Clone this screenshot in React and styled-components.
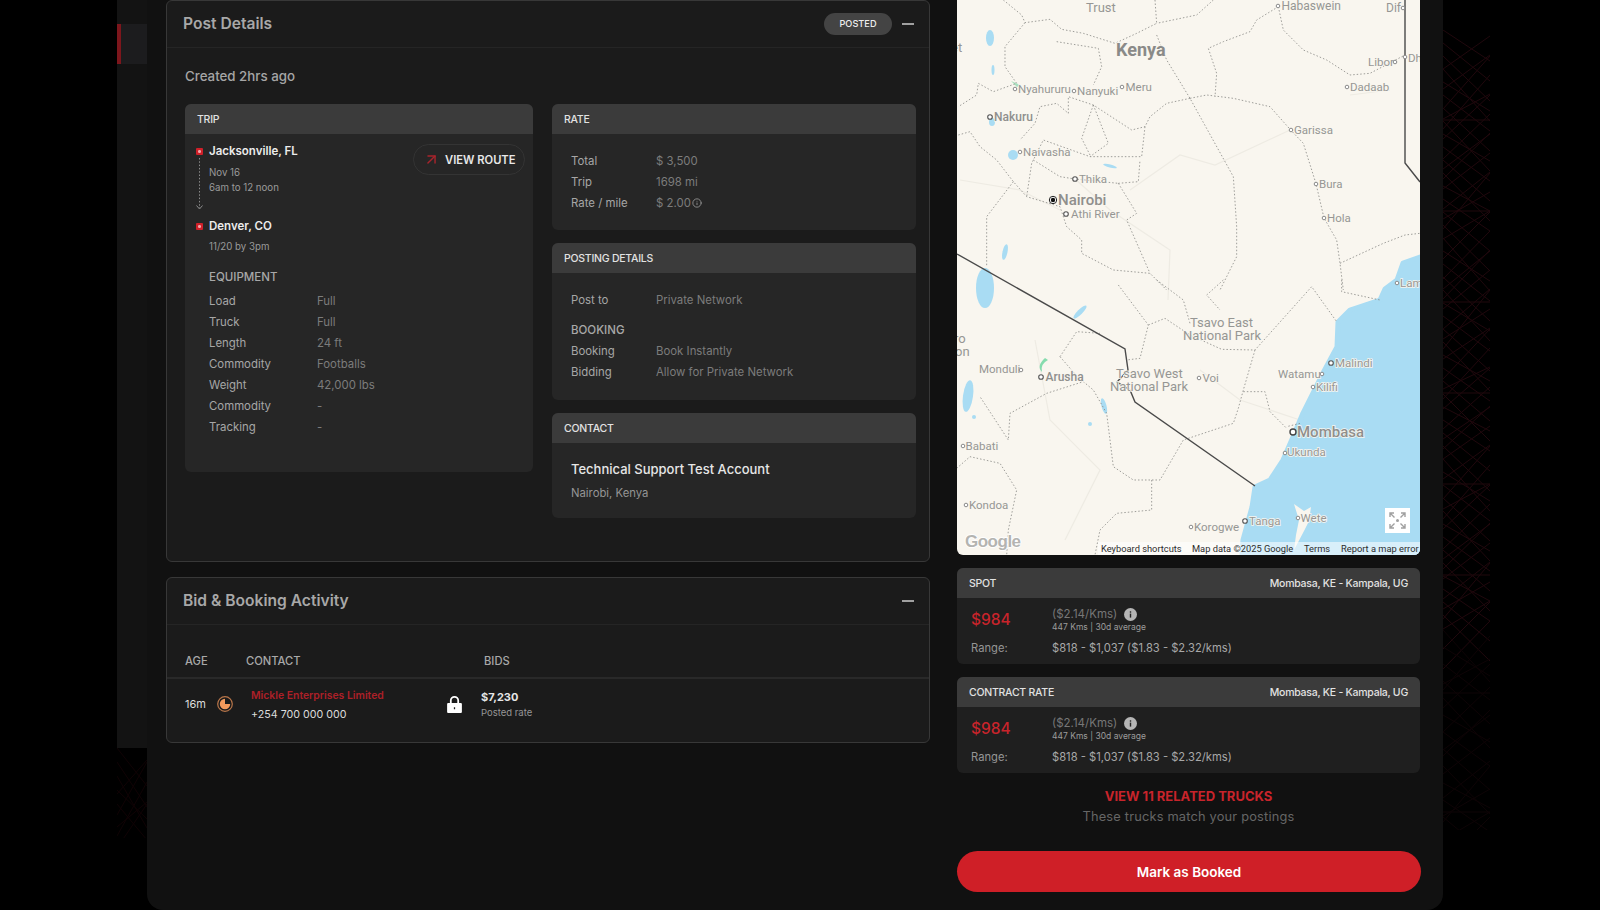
import React from 'react';
import styled, { createGlobalStyle } from 'styled-components';
import { ArrowUpRight, Info } from 'lucide-react';

const GlobalStyle = createGlobalStyle`
  html, body {
    margin: 0;
    padding: 0;
    background: #000;
  }
  body {
    font-family: 'Inter', 'Liberation Sans', sans-serif;
    color: #ddd;
  }
  * {
    box-sizing: border-box;
  }
`;

const Page = styled.div`
  display: flex;
  width: 1600px;
  height: 910px;
  overflow: hidden;
  background: #000;
`;

const Gutter = styled.div`
  width: 117px;
  flex: none;
`;

const Rail = styled.div`
  width: 30px;
  flex: none;
  display: flex;
  flex-direction: column;
`;

const RailPanel = styled.div`
  height: 748px;
  padding-top: 24px;
  background: #131313;
`;

const RedTab = styled.div`
  height: 40px;
  background: #1c1c1e;
  border-left: 4px solid #7d161c;
`;

const Main = styled.main`
  width: 1296px;
  height: 910px;
  flex: none;
  display: flex;
  gap: 27px;
  padding: 0 23px 0 19px;
  background: #111;
  border-radius: 0 0 16px 16px;
`;

const LeftColumn = styled.div`
  width: 764px;
  flex: none;
`;

const RightColumn = styled.div`
  width: 463px;
  flex: none;
`;

const Panel = styled.section`
  height: ${(p) => p.$height}px;
  margin-top: ${(p) => p.$top || 0}px;
  background: #1b1b1b;
  border: 1px solid #383838;
  border-radius: 6px;
`;

const PanelHeader = styled.header`
  display: flex;
  align-items: center;
  height: 47px;
  padding: 0 15px 0 16px;
  border-bottom: 1px solid #252525;
`;

const PanelTitle = styled.h2`
  flex: 1;
  margin: 0;
  font-size: 15.6px;
  line-height: 20px;
  font-weight: 600;
  color: #a8a8a8;
`;

const StatusPill = styled.span`
  width: 68px;
  height: 22px;
  margin-right: 10px;
  border-radius: 11px;
  background: #444;
  color: #eee;
  font-size: 9.2px;
  font-weight: 500;
  line-height: 22px;
  text-align: center;
`;

const Collapse = styled.span`
  width: 12px;
  height: 2px;
  background: #a0a0a0;
`;

const PanelBody = styled.div`
  padding: 18px 13px 0 18px;
`;

const Created = styled.div`
  margin-bottom: 18px;
  font-size: 13.3px;
  line-height: 20px;
  font-weight: 500;
  color: #a6a6a6;
`;

const Columns = styled.div`
  display: grid;
  grid-template-columns: 348px 364px;
  gap: 19px;
  align-items: start;
`;

const Stack = styled.div`
  display: flex;
  flex-direction: column;
  gap: 13px;
`;

const Card = styled.div`
  overflow: hidden;
  border-radius: 6px;
  background: ${(p) => p.$bg || '#262626'};
`;

const CardHeader = styled.div`
  display: flex;
  justify-content: space-between;
  align-items: center;
  height: 30px;
  padding: 0 12px;
  background: #3b3b3b;
  color: #e2e2e2;
  font-size: 10.5px;
  letter-spacing: -0.25px;
  font-weight: 500;
`;

const TripBody = styled.div`
  padding: 9px 8px 34px 11px;
`;

const TripTop = styled.div`
  display: flex;
  justify-content: space-between;
  align-items: flex-start;
`;

const Stop = styled.div`
  display: flex;
  gap: 6px;
  padding-bottom: ${(p) => (p.$last ? 0 : 7)}px;
`;

const MarkerColumn = styled.div`
  width: 7px;
  flex: none;
  display: flex;
  flex-direction: column;
  align-items: center;
  padding-top: 5px;
`;

const Marker = styled.span`
  display: block;
  width: 7px;
  height: 7px;
  flex: none;
  border-radius: 1px;
  background: radial-gradient(circle, #f2a6aa 0 1.2px, #cf2029 1.8px);
`;

const Connector = styled.svg`
  flex: none;
  margin-top: 3px;
`;

const StopName = styled.div`
  font-size: 11.5px;
  line-height: 16px;
  font-weight: 600;
  color: #ececec;
`;

const StopNote = styled.div`
  margin-top: ${(p) => p.$top || 0}px;
  font-size: 9.7px;
  line-height: 15px;
  color: #9a9a9a;
`;

const RouteButton = styled.div`
  display: flex;
  align-items: center;
  gap: 5px;
  width: 112px;
  height: 31px;
  margin-top: 1px;
  padding-left: 9px;
  border: 1px solid #343434;
  border-radius: 16px;
  color: #e8e8e8;
  font-size: 11.2px;
  font-weight: 600;
`;

const SubHeading = styled.div`
  margin-top: ${(p) => p.$top || 0}px;
  font-size: 11.5px;
  line-height: 16px;
  font-weight: 500;
  color: #a8a8a8;
`;

const EquipmentBlock = styled.div`
  padding: 15px 0 0 13px;
`;

const InfoRows = styled.div`
  display: grid;
  grid-template-columns: ${(p) => p.$label}px 1fr;
  margin-top: ${(p) => p.$top || 0}px;
  font-size: 11.4px;
  line-height: 21px;
`;

const InfoLabel = styled.span`
  color: #a6a6a6;
`;

const InfoValue = styled.span`
  display: flex;
  align-items: center;
  gap: 1px;
  color: #7c7c7c;
`;

const InfoBody = styled.div`
  padding: 16.5px 19px ${(p) => p.$bottom || 16.5}px;
`;

const ContactBody = styled.div`
  padding: 16px 19px 17px;
`;

const ContactName = styled.div`
  font-size: 13px;
  line-height: 20px;
  font-weight: 500;
  color: #e6e6e6;
`;

const ContactPlace = styled.div`
  margin-top: 6px;
  font-size: 11.3px;
  line-height: 16px;
  color: #959595;
`;

const TableHead = styled.div`
  display: grid;
  grid-template-columns: 61px 238px 1fr;
  padding: 28px 18px 8px;
  border-bottom: 2px solid #292929;
  font-size: 11.2px;
  line-height: 16px;
  font-weight: 500;
  color: #a8a8a8;
`;

const TableRow = styled.div`
  display: grid;
  grid-template-columns: 32px 34px 195px 35px 1fr;
  align-items: center;
  height: 50px;
  padding-left: 18px;
`;

const Age = styled.span`
  font-size: 11px;
  color: #ddd;
`;

const CompanyName = styled.div`
  margin-top: 2px;
  font-size: 10.4px;
  line-height: 16px;
  font-weight: 600;
  color: #ac2028;
`;

const Phone = styled.div`
  margin-top: 3px;
  font-size: 10.7px;
  line-height: 16px;
  color: #dcdcdc;
`;

const BidAmount = styled.div`
  font-size: 11px;
  line-height: 16px;
  font-weight: 700;
  color: #e6e6e6;
`;

const BidNote = styled.div`
  font-size: 9.5px;
  line-height: 15px;
  color: #969696;
`;

const MapFrame = styled.div`
  position: relative;
  height: 555px;
  overflow: hidden;
  border-radius: 0 0 6px 6px;
  background: #f9f6ef;
`;

const MapCanvas = styled.svg`
  display: block;
`;

const MapLabel = styled.text`
  font-family: 'Roboto', 'Liberation Sans', sans-serif;
  font-size: ${(p) => p.$size || 11.5}px;
  font-weight: ${(p) => p.$weight || 400};
  fill: ${(p) => p.$fill || '#969694'};
  stroke: #f9f6ef;
  stroke-width: 1.5px;
  paint-order: stroke;
`;

const GoogleMark = styled.div`
  position: absolute;
  left: 8px;
  bottom: 2px;
  font-family: 'Liberation Sans', sans-serif;
  font-size: 17px;
  line-height: 22px;
  font-weight: 700;
  letter-spacing: -0.5px;
  color: #b4b4b1;
  text-shadow: 0 0 1px #fff, 1px 0 1px #fff, -1px 0 1px #fff, 0 1px 1px #fff, 0 -1px 1px #fff;
`;

const FullscreenButton = styled.div`
  position: absolute;
  right: 10px;
  bottom: 22px;
  display: flex;
  width: 25px;
  height: 25px;
  background: #fff;
`;

const Attribution = styled.div`
  position: absolute;
  right: 0;
  bottom: 0;
  display: flex;
  width: 322px;
  height: 13px;
  padding-left: 3px;
  background: rgba(255, 255, 255, 0.55);
  color: #2c2c2c;
  font-family: 'Roboto', 'Liberation Sans', sans-serif;
  font-size: 9.3px;
  line-height: 13px;
  white-space: nowrap;
`;

const AttributionItem = styled.span`
  width: ${(p) => p.$width}px;
  flex: none;
`;

const RateCard = styled(Card)`
  margin-top: 13px;
`;

const RateBody = styled.div`
  height: 66px;
  padding: 8px 14px 0;
`;

const RateGrid = styled.div`
  display: grid;
  grid-template-columns: 81px 1fr;
  align-items: center;
`;

const RatePrice = styled.span`
  font-size: 15.5px;
  font-weight: 500;
  color: #c8242b;
`;

const RatePerKm = styled.div`
  display: flex;
  align-items: center;
  gap: 7px;
  font-size: 11.5px;
  line-height: 16px;
  color: #777;
`;

const RateSub = styled.div`
  font-size: 8.5px;
  line-height: 11px;
  color: #9c9c9c;
`;

const RangeRow = styled(RateGrid)`
  margin-top: 7px;
  font-size: 11.2px;
  line-height: 16px;
`;

const RangeLabel = styled.span`
  color: #959595;
`;

const RangeValue = styled.span`
  color: #a8a8a8;
`;

const RelatedLink = styled.div`
  margin-top: 14px;
  text-align: center;
  font-size: 13px;
  line-height: 18px;
  font-weight: 700;
  color: #c8242b;
`;

const RelatedNote = styled.div`
  margin-top: 3px;
  text-align: center;
  font-size: 12.8px;
  line-height: 18px;
  letter-spacing: 0.2px;
  color: #666;
`;

const BookButton = styled.button`
  display: block;
  width: calc(100% + 1px);
  height: 41px;
  margin-top: 25px;
  border: 0;
  border-radius: 21px;
  background: #cf1f27;
  color: #fff;
  font-family: inherit;
  font-size: 13.5px;
  font-weight: 600;
`;

const RightGutter = styled.div`
  width: 47px;
  flex: none;
  padding-top: 30px;
`;

const PatternSvg = styled.svg`
  display: block;
`;

const equipment = [
  ['Load', 'Full'],
  ['Truck', 'Full'],
  ['Length', '24 ft'],
  ['Commodity', 'Footballs'],
  ['Weight', '42,000 lbs'],
  ['Commodity', '-'],
  ['Tracking', '-'],
];

// the reference's map crops a few labels at its edge (et, ro, on, Dh, Lam), so they stay cropped here
const places = [
  ['Trust', 1086, 12, 13],
  ['Habaswein', 1281.5, 10, 12],
  ['Dif', 1386, 12, 12],
  ['et', 951, 52, 13],
  ['Kenya', 1116, 56, 18, 700, '#8a8a88'],
  ['Nyahururu', 1018, 92.5],
  ['Nanyuki', 1077, 95],
  ['Meru', 1125.5, 91],
  ['Nakuru', 994, 121, 12, 500, '#8f8f8d'],
  ['Naivasha', 1023, 156],
  ['Thika', 1079, 183],
  ['Nairobi', 1058, 205, 15, 500, '#8f8f8d'],
  ['Athi River', 1071, 218],
  ['Garissa', 1294, 134],
  ['Bura', 1319, 188],
  ['Hola', 1327, 222],
  ['Dadaab', 1350, 91],
  ['Libor', 1368, 66],
  ['Dh', 1408, 62],
  ['Lam', 1400, 287],
  ['Tsavo East', 1190, 327, 13],
  ['National Park', 1183, 339.5, 13],
  ['ro', 954, 343, 13],
  ['on', 955, 356, 13],
  ['Monduli', 979, 373],
  ['Arusha', 1045.5, 381, 12, 500, '#8f8f8d'],
  ['Tsavo West', 1116, 378, 13],
  ['National Park', 1110, 391, 13],
  ['Voi', 1202.5, 382],
  ['Watamu', 1278, 378],
  ['Malindi', 1335, 367],
  ['Kilifi', 1316, 391],
  ['Mombasa', 1297, 437, 15, 500, '#8f8f8d'],
  ['Ukunda', 1287, 456],
  ['Babati', 965.5, 450],
  ['Kondoa', 969, 509],
  ['Korogwe', 1194, 531],
  ['Tanga', 1249, 525],
  ['Wete', 1300.5, 522],
];

const dots = [
  [1278, 6], [1403, 8], [1015, 89], [1074, 91], [1122, 87], [1020, 152], [1291, 130],
  [1316, 184], [1324, 218], [1347, 87], [1395, 62], [1405, 57], [1397, 283], [1021, 370],
  [1199, 378], [1322, 374], [1313, 387], [1285, 453], [963, 446], [966, 505], [1191, 527],
  [1298, 518],
];

const openDots = [
  [990, 117], [1075, 179], [1066, 214], [1041, 377], [1331, 363], [1245, 521],
];

// dotted county lines, traced in zoomed coords (3x), see the group transforms
const upperBorders = [
  'M160 0L215 45L225 68L300 58L335 88L400 100L495 130L560 100L620 70L615 0',
  'M790 0L740 45L620 70',
  'M985 20L920 60L900 95L820 125L775 145L800 220L795 290',
  'M985 20L1000 90L1060 150L1130 180L1200 225L1260 220L1365 165',
  'M620 105L650 180L720 295L850 530L860 680L860 770L810 870',
  'M720 295L770 285L850 295L960 320L1022 390L1060 430L1098 551L1122 654L1160 720L1170 790L1180 870',
  'M1170 790L1300 730L1365 705L1410 700',
  'M720 295L650 310L600 350L585 380L545 390L430 315L355 290L355 340L320 310L270 320L255 370L210 420',
  'M430 315L395 415L420 465M430 315L475 430L420 470',
  'M225 68L165 140L165 200L200 250L130 275L85 250L80 285L25 320',
  'M25 405L60 395L90 440L140 480L190 545L230 590L330 620L350 680L395 720L395 760L490 810L600 820L650 870',
  'M190 545L110 650L110 800',
  'M585 380L575 470L420 470L280 420L245 490L230 590',
  'M505 550L560 640L530 660L600 820M505 550L565 545L570 480',
  'M250 480L330 530L375 537L505 550',
  'M320 125L445 145L455 200L430 255',
];

const lowerBorders = [
  'M505 15L595 135L570 235L530 240',
  'M620 0L700 60L720 130',
  'M595 135L645 115L720 165L815 208L915 210L1085 20L1160 125',
  'M1175 0L1175 35L1290 60',
  'M820 0L770 45L810 90',
  'M915 210L880 330L865 385L850 430L700 480L630 600L550 600L490 560L470 400L430 330L400 305L290 340L180 400L175 480L90 350',
  'M880 335L945 335L960 395L1010 445M1050 430L1010 440',
  'M330 230L380 155L450 160M330 230L395 305',
  'M20 565L60 530L150 550L200 630L175 750L170 825',
  'M605 600L605 690L500 700L450 750L435 825',
];

const roads = [
  'M1290 130L1215 165L1180 155L1130 190',
  'M1350 95L1390 90',
  'M1075 179L1110 210L1170 250L1168 300',
  'M1200 370L1240 400L1300 420',
  'M1035 340L1050 420L1100 470L1065 540',
  'M960 180L1020 190L1060 210',
];

// faint red mesh on the black margins, generated instead of traced
function meshLines(width, height, step, seed) {
  const lines = [];
  for (let y = 0, i = seed; y < height; y += step, i += 1) {
    const drop = 24 + ((i * 37) % 30);
    lines.push(`M0 ${y}L${width} ${y + drop}`);
    lines.push(`M${width} ${y + (i % 3) * 6}L0 ${y + drop + 8}`);
    if (i % 7 === 0) lines.push(`M0 ${y + 12}L${width} ${y + 12}`);
  }
  return lines.join('');
}

const CollapseHeader = ({ title, children }) => (
  <PanelHeader>
    <PanelTitle>{title}</PanelTitle>
    {children}
    <Collapse />
  </PanelHeader>
);

const Rows = ({ rows, label, top }) => (
  <InfoRows $label={label} $top={top}>
    {rows.map(([name, value], i) => (
      <React.Fragment key={i}>
        <InfoLabel>{name}</InfoLabel>
        <InfoValue>{value}</InfoValue>
      </React.Fragment>
    ))}
  </InfoRows>
);

const ClockIcon = () => (
  <svg width="16" height="16" viewBox="0 0 16 16">
    <circle cx="8" cy="8" r="7.3" fill="none" stroke="#b9764a" strokeWidth="1.2" />
    <path d="M8 2.8A5.2 5.2 0 1 0 13.2 8H8Z" fill="#f59a5c" />
  </svg>
);

const LockIcon = () => (
  <svg width="17" height="19" viewBox="0 0 16 18">
    <path d="M4.5 8V5.2a3.5 3.5 0 0 1 7 0V8" fill="none" stroke="#fff" strokeWidth="1.7" />
    <path
      fillRule="evenodd"
      d="M2 7.5h12a1 1 0 0 1 1 1V16a1 1 0 0 1-1 1H2a1 1 0 0 1-1-1V8.500a1 1 0 0 1 1-1ZM7.400 11.500v2h1.200v-2Z"
      fill="#fff"
    />
  </svg>
);

const InfoDot = () => (
  <svg width="13" height="13" viewBox="0 0 13 13">
    <circle cx="6.500" cy="6.500" r="6.500" fill="#b5b5b5" />
    <rect x="5.800" y="5.600" width="1.400" height="4" fill="#222" />
    <rect x="5.800" y="3.300" width="1.400" height="1.400" fill="#222" />
  </svg>
);

const FullscreenIcon = () => (
  <svg width="25" height="25" viewBox="0 0 25 25" fill="none" stroke="#a0a0a0" strokeWidth="1.4">
    <path d="M5 9V5H9M5 5L9.500 9.500M20 9V5H16M20 5L15.500 9.500M5 16V20H9M5 20L9.500 15.500M20 16V20H16M20 20L15.500 15.500" />
    <circle cx="12.500" cy="12.500" r="1.500" fill="#a0a0a0" stroke="none" />
  </svg>
);

const MapDrawing = () => (
  <MapCanvas width="463" height="555" viewBox="957 0 463 555">
    {roads.map((d) => (
      <path key={d} d={d} fill="none" stroke="#eeebe3" strokeWidth="1.2" />
    ))}
    <path
      d="M1420 257L1403 263L1397 280L1385 289L1380 300L1350 310L1338 322L1337 347L1323 373L1312 395L1303 413L1293 437L1283 460L1270 480L1255 487L1252 507L1243 540L1242 555L1420 555Z"
      fill="#a9dcf3"
      stroke="#a9dcf3"
      strokeWidth="5"
      strokeLinejoin="round"
    />
    <path d="M1294 504L1304 511L1311 507L1309 521L1304 531L1294 550L1296 535L1299 520Z" fill="#f9f6ef" />
    <g fill="#a9dcf3">
      <ellipse cx="990" cy="38" rx="4" ry="8" />
      <ellipse cx="1013" cy="155" rx="5" ry="5" />
      <ellipse cx="985" cy="288" rx="9" ry="20" />
      <ellipse cx="992" cy="122" rx="3" ry="4" />
      <ellipse cx="993" cy="70" rx="1.500" ry="5" />
      <ellipse cx="1005" cy="252" rx="2.500" ry="8" transform="rotate(12 1005 252)" />
      <ellipse cx="1080" cy="312" rx="2.500" ry="9" transform="rotate(45 1080 312)" />
      <ellipse cx="968" cy="396" rx="5" ry="16" transform="rotate(8 968 396)" />
      <ellipse cx="1104" cy="406" rx="2.500" ry="8" transform="rotate(-15 1104 406)" />
      <circle cx="1090" cy="424" r="2" />
      <circle cx="974" cy="417" r="2" />
      <ellipse cx="1110" cy="166" rx="7" ry="1.500" transform="rotate(15 1110 166)" />
    </g>
    <path d="M1045 358Q1036 366 1042 372Q1040 364 1048 360Z" fill="#86dcae" />
    <path d="M1011 81L1020 85L1017 87Z" fill="#a8e0bd" />
    <g transform="translate(950 0) scale(.33333)" fill="none" stroke="#8b8b88" strokeWidth="2.500" strokeDasharray="4.500 6">
      {upperBorders.map((d) => (
        <path key={d} d={d} />
      ))}
    </g>
    <g transform="translate(950 280) scale(.33333)" fill="none" stroke="#8b8b88" strokeWidth="2.500" strokeDasharray="4.500 6">
      {lowerBorders.map((d) => (
        <path key={d} d={d} />
      ))}
    </g>
    <g fill="none" stroke="#4a4a4a" strokeWidth="1.400">
      <path d="M957 254L1125 349L1128 370L1117 382L1130 390L1135 402L1255 486" />
      <path d="M1405 0V163L1420 182" />
    </g>
    {places.map(([name, x, y, size, weight, fill]) => (
      <MapLabel key={`${name}${x}`} x={x} y={y} $size={size} $weight={weight} $fill={fill}>
        {name}
      </MapLabel>
    ))}
    {dots.map(([x, y]) => (
      <circle key={`${x}${y}`} cx={x} cy={y} r="1.800" fill="#fff" stroke="#8a8a8a" strokeWidth="1" />
    ))}
    {openDots.map(([x, y]) => (
      <circle key={`${x}${y}`} cx={x} cy={y} r="2.300" fill="#fff" stroke="#555" strokeWidth="1.100" />
    ))}
    <circle cx="1053" cy="200" r="3.700" fill="#fff" stroke="#222" strokeWidth="1" />
    <circle cx="1053" cy="200" r="2.200" fill="#111" />
    <circle cx="1293" cy="432" r="3" fill="#fff" stroke="#444" strokeWidth="1.400" />
  </MapCanvas>
);

const RateSummary = ({ title }) => (
  <RateCard $bg="#1f1f1f">
    <CardHeader>
      <span>{title}</span>
      <span>Mombasa, KE - Kampala, UG</span>
    </CardHeader>
    <RateBody>
      <RateGrid>
        <RatePrice>$984</RatePrice>
        <div>
          <RatePerKm>
            ($2.14/Kms)
            <InfoDot />
          </RatePerKm>
          <RateSub>447 Kms | 30d average</RateSub>
        </div>
      </RateGrid>
      <RangeRow>
        <RangeLabel>Range:</RangeLabel>
        <RangeValue>$818 - $1,037 ($1.83 - $2.32/kms)</RangeValue>
      </RangeRow>
    </RateBody>
  </RateCard>
);

export default function App() {
  return (
    <>
      <GlobalStyle />
      <Page>
        <Gutter />
        <Rail>
          <RailPanel>
            <RedTab />
          </RailPanel>
          <PatternSvg width="30" height="90">
            <path d={meshLines(30, 70, 14, 2)} fill="none" stroke="#100305" strokeWidth="1" />
          </PatternSvg>
        </Rail>
        <Main>
          <LeftColumn>
            <Panel $height={562}>
              <CollapseHeader title="Post Details">
                <StatusPill>POSTED</StatusPill>
              </CollapseHeader>
              <PanelBody>
                <Created>Created 2hrs ago</Created>
                <Columns>
                  <Card>
                    <CardHeader>TRIP</CardHeader>
                    <TripBody>
                      <TripTop>
                        <div>
                          <Stop>
                            <MarkerColumn>
                              <Marker />
                              <Connector width="9" height="53" viewBox="0 0 9 53" fill="none" stroke="#8a8a8a">
                                <path d="M4.500 0V50" strokeDasharray="1.500 1.800" />
                                <path d="M1.500 47.500L4.500 51L7.500 47.500" />
                              </Connector>
                            </MarkerColumn>
                            <div>
                              <StopName>Jacksonville, FL</StopName>
                              <StopNote $top={6}>Nov 16</StopNote>
                              <StopNote>6am to 12 noon</StopNote>
                            </div>
                          </Stop>
                          <Stop $last>
                            <MarkerColumn>
                              <Marker />
                            </MarkerColumn>
                            <div>
                              <StopName>Denver, CO</StopName>
                              <StopNote $top={5}>11/20 by 3pm</StopNote>
                            </div>
                          </Stop>
                        </div>
                        <RouteButton>
                          <ArrowUpRight size={17} color="#a8242c" strokeWidth={2} />
                          VIEW ROUTE
                        </RouteButton>
                      </TripTop>
                      <EquipmentBlock>
                        <SubHeading>EQUIPMENT</SubHeading>
                        <Rows rows={equipment} label={108} top={5.5} />
                      </EquipmentBlock>
                    </TripBody>
                  </Card>
                  <Stack>
                    <Card>
                      <CardHeader>RATE</CardHeader>
                      <InfoBody>
                        <Rows
                          label={85}
                          rows={[
                            ['Total', '$ 3,500'],
                            ['Trip', '1698 mi'],
                            [
                              'Rate / mile',
                              <>
                                $ 2.00
                                <Info size={10} color="#9a9a9a" />
                              </>,
                            ],
                          ]}
                        />
                      </InfoBody>
                    </Card>
                    <Card>
                      <CardHeader>POSTING DETAILS</CardHeader>
                      <InfoBody $bottom={17.5}>
                        <Rows label={85} rows={[['Post to', 'Private Network']]} />
                        <SubHeading $top={11.5}>BOOKING</SubHeading>
                        <Rows
                          label={85}
                          top={2.500}
                          rows={[
                            ['Booking', 'Book Instantly'],
                            ['Bidding', 'Allow for Private Network'],
                          ]}
                        />
                      </InfoBody>
                    </Card>
                    <Card>
                      <CardHeader>CONTACT</CardHeader>
                      <ContactBody>
                        <ContactName>Technical Support Test Account</ContactName>
                        <ContactPlace>Nairobi, Kenya</ContactPlace>
                      </ContactBody>
                    </Card>
                  </Stack>
                </Columns>
              </PanelBody>
            </Panel>
            <Panel $height={166} $top={15}>
              <CollapseHeader title="Bid & Booking Activity" />
              <TableHead>
                <span>AGE</span>
                <span>CONTACT</span>
                <span>BIDS</span>
              </TableHead>
              <TableRow>
                <Age>16m</Age>
                <ClockIcon />
                <div>
                  <CompanyName>Mickle Enterprises Limited</CompanyName>
                  <Phone>+254 700 000 000</Phone>
                </div>
                <LockIcon />
                <div>
                  <BidAmount>$7,230</BidAmount>
                  <BidNote>Posted rate</BidNote>
                </div>
              </TableRow>
            </Panel>
          </LeftColumn>
          <RightColumn>
            <MapFrame>
              <MapDrawing />
              <GoogleMark>Google</GoogleMark>
              <FullscreenButton>
                <FullscreenIcon />
              </FullscreenButton>
              <Attribution>
                <AttributionItem $width={91}>Keyboard shortcuts</AttributionItem>
                <AttributionItem $width={112}>Map data ©2025 Google</AttributionItem>
                <AttributionItem $width={37}>Terms</AttributionItem>
                <span>Report a map error</span>
              </Attribution>
            </MapFrame>
            <RateSummary title="SPOT" />
            <RateSummary title="CONTRACT RATE" />
            <RelatedLink>VIEW 11 RELATED TRUCKS</RelatedLink>
            <RelatedNote>These trucks match your postings</RelatedNote>
            <BookButton>Mark as Booked</BookButton>
          </RightColumn>
        </Main>
        <RightGutter>
          <PatternSvg width="47" height="800">
            <path d={meshLines(47, 590, 13, 1)} fill="none" stroke="#20080d" strokeWidth="1" />
            <path d={meshLines(47, 200, 17, 4)} transform="translate(0 600)" fill="none" stroke="#0e0406" strokeWidth="1" />
          </PatternSvg>
        </RightGutter>
      </Page>
    </>
  );
}
